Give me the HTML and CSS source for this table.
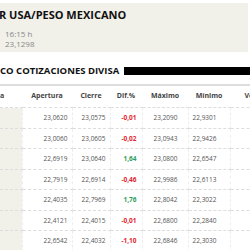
FILE: index.html
```html
<!DOCTYPE html>
<html lang="es">
<head>
  <meta charset="UTF-8" />
  <title>Dólar USA/Peso Mexicano</title>
  <link rel="stylesheet" href="styles.css">
</head>
<body>
  <div class="quote">
    <h1 class="quote-title">R USA/PESO MEXICANO</h1>
    <div class="quote-meta">
      <span>16:15 h</span>
      <span>23,1298</span>
    </div>
  </div>

  <h2 class="section-title">
    <span>CO COTIZACIONES DIVISA</span>
    <span class="section-bar"></span>
  </h2>

  <table class="history">
    <thead>
      <tr>
        <th class="c-date">a</th>
        <th class="c-open">Apertura</th>
        <th class="c-close">Cierre</th>
        <th class="c-dif">Dif.%</th>
        <th class="c-max">Máximo</th>
        <th class="c-min">Mínimo</th>
        <th class="c-vol">Volumen</th>
      </tr>
    </thead>
    <tbody>
      <tr><td class="c-date"></td><td class="c-open">23,0620</td><td class="c-close">23,0575</td><td class="c-dif down">-0,01</td><td class="c-max">23,2090</td><td class="c-min">22,9301</td><td class="c-vol"></td></tr>
      <tr><td class="c-date"></td><td class="c-open">23,0060</td><td class="c-close">23,0605</td><td class="c-dif down">-0,02</td><td class="c-max">23,0943</td><td class="c-min">22,9426</td><td class="c-vol"></td></tr>
      <tr><td class="c-date"></td><td class="c-open">22,6919</td><td class="c-close">23,0640</td><td class="c-dif up">1,64</td><td class="c-max">23,0800</td><td class="c-min">22,6547</td><td class="c-vol"></td></tr>
      <tr><td class="c-date"></td><td class="c-open">22,7919</td><td class="c-close">22,6914</td><td class="c-dif down">-0,46</td><td class="c-max">22,9986</td><td class="c-min">22,6113</td><td class="c-vol"></td></tr>
      <tr><td class="c-date"></td><td class="c-open">22,4035</td><td class="c-close">22,7969</td><td class="c-dif up">1,76</td><td class="c-max">22,8042</td><td class="c-min">22,3022</td><td class="c-vol"></td></tr>
      <tr><td class="c-date"></td><td class="c-open">22,4121</td><td class="c-close">22,4015</td><td class="c-dif down">-0,01</td><td class="c-max">22,6800</td><td class="c-min">22,2840</td><td class="c-vol"></td></tr>
      <tr><td class="c-date"></td><td class="c-open">22,6542</td><td class="c-close">22,4032</td><td class="c-dif down">-1,10</td><td class="c-max">22,6846</td><td class="c-min">22,3030</td><td class="c-vol"></td></tr>
    </tbody>
  </table>
</body>
</html>
```

FILE: styles.css
```css
body { margin: 0; font-family: "Open Sans", "DejaVu Sans", sans-serif; color: #333; overflow: hidden; }

.quote { background: #f1f0e9; margin: 3px 2px 0 0; height: 49px; box-sizing: border-box; padding-top: 2px; }
.quote-title { margin: 0 0 0 -1px; font-size: 11px; font-weight: 700; line-height: 20px; color: #111; white-space: nowrap; }
.quote-meta { display: flex; flex-direction: column; padding: 4px 0 0 5px; font-size: 8px; line-height: 9.5px; color: #888; }

.section-title { display: flex; align-items: center; gap: 5px; margin: 12px 0 0; padding-bottom: 6px; border-bottom: 2px solid #ddd; font-size: 9.5px; font-weight: 700; color: #111; line-height: 14px; white-space: nowrap; }
.section-bar { flex: 1; height: 8px; background: #000; }

.history { border-collapse: collapse; table-layout: fixed; width: 290px; font-size: 6.5px; }
.history th { height: 18px; font-weight: 700; color: #444; text-align: center; font-size: 7px; border-bottom: 1px dashed #ddd; padding: 0 0 3px; }
.history td { height: 19.5px; color: #555; text-align: right; border-bottom: 1px dashed #ddd; border-right: 1px dashed #eee; padding: 0 4px 0 0; }
.history th.c-date { text-align: left; }
.history td.c-date { background: #f1f0e9; }

.c-date { width: 22px; }
.c-open { width: 50px; }
.c-close { width: 38px; }
.c-dif { width: 32px; }
.c-max { width: 46px; }
.c-min { width: 42px; }
.c-vol { width: 60px; }

.history td.c-dif { padding-right: 5px; font-weight: 700; }
.history td.c-max { padding-right: 10px; }
.history td.c-min { padding-right: 13px; }
.down { color: #e2262f !important; }
.up { color: #2f9e5b !important; }
```
